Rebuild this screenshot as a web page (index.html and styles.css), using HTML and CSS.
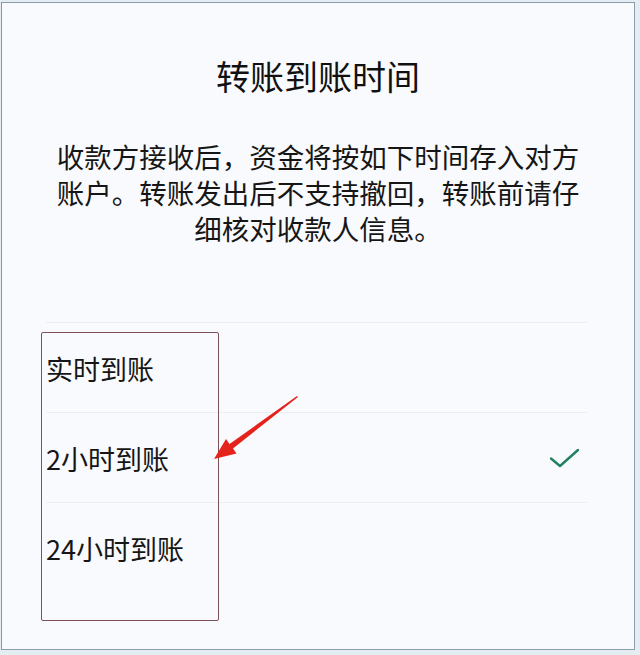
FILE: index.html
```html
<!DOCTYPE html>
<html lang="zh-CN">
<head>
  <meta charset="utf-8">
  <title>转账到账时间</title>
  <link rel="stylesheet" href="styles.css">
</head>
<body>
  <div class="sheet">
    <h1 class="sheet__title">转账到账时间</h1>
    <p class="sheet__text">收款方接收后，资金将按如下时间存入对方账户。转账发出后不支持撤回，转账前请仔细核对收款人信息。</p>
    <ul class="options">
      <li class="options__item">实时到账</li>
      <li class="options__item options__item-active">
        <span>2小时到账</span>
        <svg class="options__check" width="32" height="22" viewBox="0 0 32 22" fill="none">
          <path d="M2 11.5 L11 19 L29 3" stroke="#22815f" stroke-width="2.4" stroke-linecap="round" stroke-linejoin="round"/>
        </svg>
      </li>
      <li class="options__item">24小时到账</li>
    </ul>
  </div>

  <!-- annotation drawn over the screenshot -->
  <div class="mark-box"></div>
  <svg class="mark-arrow" width="640" height="655" viewBox="0 0 640 655">
    <polygon fill="#e5231d" points="298,397 233,448.5 236.5,453.5 214,459 226,439 229.5,444 297,396"/>
  </svg>
</body>
</html>
```

FILE: styles.css
```css
*, *::before, *::after {
  margin: 0;
  padding: 0;
  box-sizing: border-box;
}

html {
  color: #161616;
  font-family: "Noto Sans CJK SC", "Noto Sans", sans-serif;
}

body {
  position: relative;
  width: 640px;
  height: 655px;
  padding: 2px 5px 5px 1px;
  background-color: #e4edf2;
  overflow: hidden;
}

.sheet {
  height: 648px;
  border: 1px solid #8d9cad;
  border-left-color: #7d9ab4;
  background-color: #f9fafd;
  display: flex;
  flex-direction: column;
  align-items: center;
}

.sheet__title {
  margin-top: 52px;
  font-weight: 400;
  font-size: 34px;
  line-height: 41px;
  color: #111111;
}

.sheet__text {
  width: 530px;
  margin-top: 42px;
  font-size: 27.5px;
  line-height: 36px;
  text-align: center;
}

.options {
  width: 541px;
  margin-top: 76px;
  margin-left: 44px;
  list-style: none;
  align-self: flex-start;
}

.options__item {
  height: 90px;
  padding-top: 1px;
  border-top: 1px solid #eceef3;
  display: flex;
  align-items: center;
  justify-content: space-between;
  font-size: 27px;
}

.options__check {
  margin-right: 6px;
}

.mark-box {
  position: absolute;
  left: 41px;
  top: 332px;
  width: 178px;
  height: 289px;
  border: 1px solid #7c5158;
  border-radius: 2px;
}

.mark-arrow {
  position: absolute;
  left: 0;
  top: 0;
}
```
